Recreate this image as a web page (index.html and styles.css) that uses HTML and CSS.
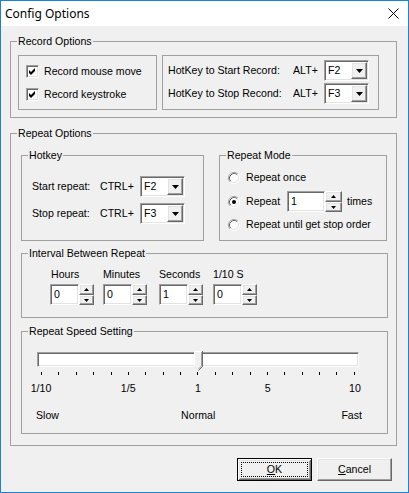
FILE: index.html
```html
<!DOCTYPE html>
<html>
<head>
<meta charset="utf-8">
<title>Config Options</title>
<link rel="stylesheet" href="styles.css">
</head>
<body>
<div class="window">
  <div class="titlebar">
    <span class="title">Config Options</span>
    <svg class="close" width="11" height="11" viewBox="0 0 11 11"><path d="M0.5 0.5L10.5 10.5M10.5 0.5L0.5 10.5" stroke="#000" stroke-width="1" fill="none"/></svg>
  </div>
  <div class="client">
    <div class="group g-record">
      <span class="gtitle">Record Options</span>
      <div class="record-row">
        <div class="box box-checks">
          <div class="check-row">
            <span class="checkbox sunken"><svg width="9" height="9" viewBox="0 0 9 9"><path d="M1 3L3 5L7 1L7 4L3 8L1 6Z" fill="#000"/></svg></span>
            <span>Record mouse move</span>
          </div>
          <div class="check-row">
            <span class="checkbox sunken"><svg width="9" height="9" viewBox="0 0 9 9"><path d="M1 3L3 5L7 1L7 4L3 8L1 6Z" fill="#000"/></svg></span>
            <span>Record keystroke</span>
          </div>
        </div>
        <div class="box box-hotkeys">
          <div class="hk-row">
            <span class="hk-label">HotKey to Start Record:</span>
            <span class="hk-mod">ALT+</span>
            <span class="combo sunken"><span class="combo-text">F2</span><span class="drop raised"><svg width="7" height="4" viewBox="0 0 7 4"><path d="M0 0H7L3.5 4Z" fill="#000"/></svg></span></span>
          </div>
          <div class="hk-row">
            <span class="hk-label">HotKey to Stop Recond:</span>
            <span class="hk-mod">ALT+</span>
            <span class="combo sunken"><span class="combo-text">F3</span><span class="drop raised"><svg width="7" height="4" viewBox="0 0 7 4"><path d="M0 0H7L3.5 4Z" fill="#000"/></svg></span></span>
          </div>
        </div>
      </div>
    </div>

    <div class="group g-repeat">
      <span class="gtitle">Repeat Options</span>
      <div class="repeat-top">
        <div class="group g-hotkey">
          <span class="gtitle">Hotkey</span>
          <div class="rk-row">
            <span class="rk-label">Start repeat:</span>
            <span class="rk-mod">CTRL+</span>
            <span class="combo sunken"><span class="combo-text">F2</span><span class="drop raised"><svg width="7" height="4" viewBox="0 0 7 4"><path d="M0 0H7L3.5 4Z" fill="#000"/></svg></span></span>
          </div>
          <div class="rk-row">
            <span class="rk-label">Stop repeat:</span>
            <span class="rk-mod">CTRL+</span>
            <span class="combo sunken"><span class="combo-text">F3</span><span class="drop raised"><svg width="7" height="4" viewBox="0 0 7 4"><path d="M0 0H7L3.5 4Z" fill="#000"/></svg></span></span>
          </div>
        </div>
        <div class="group g-mode">
          <span class="gtitle">Repeat Mode</span>
          <div class="radio-row r1">
            <svg class="radio" width="12" height="12" viewBox="0 0 12 12"><circle cx="6" cy="6" r="5" fill="#fff"/><path d="M2.11 9.89A5.5 5.5 0 0 1 9.89 2.11" stroke="#a0a0a0" fill="none"/><path d="M9.89 2.11A5.5 5.5 0 0 1 2.11 9.89" stroke="#fff" fill="none"/><path d="M2.82 9.18A4.5 4.5 0 0 1 9.18 2.82" stroke="#696969" fill="none"/><path d="M9.18 2.82A4.5 4.5 0 0 1 2.82 9.18" stroke="#e3e3e3" fill="none"/></svg>
            <span>Repeat once</span>
          </div>
          <div class="radio-row r2">
            <svg class="radio" width="12" height="12" viewBox="0 0 12 12"><circle cx="6" cy="6" r="5" fill="#fff"/><path d="M2.11 9.89A5.5 5.5 0 0 1 9.89 2.11" stroke="#a0a0a0" fill="none"/><path d="M9.89 2.11A5.5 5.5 0 0 1 2.11 9.89" stroke="#fff" fill="none"/><path d="M2.82 9.18A4.5 4.5 0 0 1 9.18 2.82" stroke="#696969" fill="none"/><path d="M9.18 2.82A4.5 4.5 0 0 1 2.82 9.18" stroke="#e3e3e3" fill="none"/><circle cx="6" cy="6" r="2" fill="#000"/></svg>
            <span class="rep-label">Repeat</span>
            <span class="edit sunken edit-times">1</span>
            <span class="spin spin-wide">
              <span class="spin-btn up raised"><svg width="5" height="3" viewBox="0 0 5 3"><path d="M2.5 0L5 3H0Z" fill="#000"/></svg></span>
              <span class="spin-btn down raised"><svg width="5" height="3" viewBox="0 0 5 3"><path d="M0 0H5L2.5 3Z" fill="#000"/></svg></span>
            </span>
            <span class="times">times</span>
          </div>
          <div class="radio-row r3">
            <svg class="radio" width="12" height="12" viewBox="0 0 12 12"><circle cx="6" cy="6" r="5" fill="#fff"/><path d="M2.11 9.89A5.5 5.5 0 0 1 9.89 2.11" stroke="#a0a0a0" fill="none"/><path d="M9.89 2.11A5.5 5.5 0 0 1 2.11 9.89" stroke="#fff" fill="none"/><path d="M2.82 9.18A4.5 4.5 0 0 1 9.18 2.82" stroke="#696969" fill="none"/><path d="M9.18 2.82A4.5 4.5 0 0 1 2.82 9.18" stroke="#e3e3e3" fill="none"/></svg>
            <span>Repeat until get stop order</span>
          </div>
        </div>
      </div>

      <div class="group g-interval">
        <span class="gtitle">Interval Between Repeat</span>
        <div class="ival-row">
          <div class="ival col-h">
            <span class="ival-label lbl-h">Hours</span>
            <div class="ival-ctl">
              <span class="edit sunken edit-num">0</span>
              <span class="spin">
                <span class="spin-btn up raised"><svg width="5" height="3" viewBox="0 0 5 3"><path d="M2.5 0L5 3H0Z" fill="#000"/></svg></span>
                <span class="spin-btn down raised"><svg width="5" height="3" viewBox="0 0 5 3"><path d="M0 0H5L2.5 3Z" fill="#000"/></svg></span>
              </span>
            </div>
          </div>
          <div class="ival col-m">
            <span class="ival-label">Minutes</span>
            <div class="ival-ctl">
              <span class="edit sunken edit-num">0</span>
              <span class="spin">
                <span class="spin-btn up raised"><svg width="5" height="3" viewBox="0 0 5 3"><path d="M2.5 0L5 3H0Z" fill="#000"/></svg></span>
                <span class="spin-btn down raised"><svg width="5" height="3" viewBox="0 0 5 3"><path d="M0 0H5L2.5 3Z" fill="#000"/></svg></span>
              </span>
            </div>
          </div>
          <div class="ival col-s">
            <span class="ival-label">Seconds</span>
            <div class="ival-ctl">
              <span class="edit sunken edit-num">1</span>
              <span class="spin">
                <span class="spin-btn up raised"><svg width="5" height="3" viewBox="0 0 5 3"><path d="M2.5 0L5 3H0Z" fill="#000"/></svg></span>
                <span class="spin-btn down raised"><svg width="5" height="3" viewBox="0 0 5 3"><path d="M0 0H5L2.5 3Z" fill="#000"/></svg></span>
              </span>
            </div>
          </div>
          <div class="ival col-t">
            <span class="ival-label">1/10 S</span>
            <div class="ival-ctl">
              <span class="edit sunken edit-num">0</span>
              <span class="spin">
                <span class="spin-btn up raised"><svg width="5" height="3" viewBox="0 0 5 3"><path d="M2.5 0L5 3H0Z" fill="#000"/></svg></span>
                <span class="spin-btn down raised"><svg width="5" height="3" viewBox="0 0 5 3"><path d="M0 0H5L2.5 3Z" fill="#000"/></svg></span>
              </span>
            </div>
          </div>
        </div>
      </div>

      <div class="group g-speed">
        <span class="gtitle">Repeat Speed Setting</span>
        <div class="slider">
          <div class="track sunken"></div>
          <svg class="thumb" width="9" height="20" viewBox="0 0 9 20">
            <path d="M0 0H9V15.5L4.5 20L0 15.5Z" fill="#f0f0f0"/>
            <path d="M0.5 15.5V0.5H8" stroke="#fff" fill="none"/>
            <path d="M8.5 0V15.5L4.5 19.5" stroke="#696969" fill="none"/>
            <path d="M7.5 1V15L4.5 18" stroke="#a0a0a0" fill="none"/>
            <path d="M0.5 15.5L3.5 18.5" stroke="#e3e3e3" fill="none"/>
          </svg>
        </div>
        <div class="ticks">
          <i></i><i></i><i></i><i></i><i></i><i></i><i></i><i></i><i></i><i></i>
          <i></i><i></i><i></i><i></i><i></i><i></i><i></i><i></i><i></i>
        </div>
        <div class="scale">
          <span class="scale-label" style="left:0%">1/10</span>
          <span class="scale-label" style="left:27.78%">1/5</span>
          <span class="scale-label" style="left:50%">1</span>
          <span class="scale-label" style="left:72.22%">5</span>
          <span class="scale-label" style="left:100%">10</span>
        </div>
        <div class="speed-words">
          <span>Slow</span>
          <span class="normal">Normal</span>
          <span>Fast</span>
        </div>
      </div>
    </div>

    <div class="buttons">
      <button class="btn btn-default"><span class="focus"><u>O</u>K</span></button>
      <button class="btn raised"><u>C</u>ancel</button>
    </div>
  </div>
</div>
</body>
</html>
```

FILE: styles.css
```css
* { box-sizing: border-box; }
html, body { margin: 0; padding: 0; }
body {
  width: 409px;
  height: 493px;
  overflow: hidden;
  background: #f0f0f0;
  font-family: "Liberation Sans", Arial, sans-serif;
  font-size: 10.6px;
  line-height: 13px;
  color: #000;
}
.window {
  width: 409px;
  height: 493px;
  border: 1px solid #1883d7;
  display: flex;
  flex-direction: column;
  background: #f0f0f0;
}
.titlebar {
  flex: none;
  height: 25px;
  background: #fff;
  display: flex;
  align-items: center;
  justify-content: space-between;
  padding: 0 9px 0 4px;
}
.title {
  font-family: "Noto Sans", "Segoe UI", sans-serif;
  font-size: 12px;
  line-height: 16px;
}
.close { display: block; }
.client {
  flex: 1;
  padding: 15px 0 0 9px;
}

/* 3D edges */
.sunken {
  border: 1px solid;
  border-color: #a0a0a0 #fff #fff #a0a0a0;
  box-shadow: inset 1px 1px 0 #696969, inset -1px -1px 0 #e3e3e3;
  background: #fff;
}
.raised {
  border: 1px solid;
  border-color: #fff #696969 #696969 #fff;
  box-shadow: inset -1px -1px 0 #a0a0a0, inset 1px 1px 0 #e3e3e3;
  background: #f0f0f0;
}

/* group boxes */
.group {
  position: relative;
  border: 1px solid #a0a0a0;
}
.gtitle {
  position: absolute;
  top: -7px;
  left: 6px;
  padding: 0 1px;
  background: #f0f0f0;
  line-height: 13px;
  white-space: nowrap;
}
.box { border: 1px solid #a0a0a0; }

/* record options */
.g-record {
  width: 387px;
  height: 77px;
  padding: 13px 0 0 7px;
}
.record-row {
  display: flex;
  gap: 5px;
}
.box-checks {
  width: 139px;
  height: 55px;
  padding: 9px 0 0 7px;
  display: flex;
  flex-direction: column;
  gap: 10px;
}
.check-row {
  display: flex;
  align-items: center;
  gap: 5px;
  height: 13px;
  white-space: nowrap;
}
.checkbox {
  width: 13px;
  height: 13px;
  display: flex;
  align-items: center;
  justify-content: center;
  flex: none;
}
.checkbox svg { display: block; }
.box-hotkeys {
  width: 217px;
  height: 55px;
  padding: 4px 0 0 5px;
  display: flex;
  flex-direction: column;
  gap: 2px;
}
.hk-row, .rk-row {
  display: flex;
  align-items: center;
  height: 21px;
  white-space: nowrap;
}
.hk-label { width: 125px; }
.hk-mod { width: 31px; }

/* combo */
.combo {
  width: 45px;
  height: 21px;
  display: flex;
  align-items: center;
  padding: 1px;
  flex: none;
}
.combo-text { padding-left: 2px; }
.drop {
  margin-left: auto;
  width: 16px;
  height: 17px;
  display: flex;
  align-items: center;
  justify-content: center;
}
.drop svg { display: block; }

/* repeat options */
.g-repeat {
  margin-top: 15px;
  width: 387px;
  height: 313px;
  padding: 21px 0 0 10px;
}
.repeat-top {
  display: flex;
  gap: 15px;
}
.g-hotkey {
  width: 183px;
  height: 86px;
  padding: 20px 0 0 10px;
  display: flex;
  flex-direction: column;
  gap: 6px;
}
.rk-label { width: 68px; }
.rk-mod { width: 40px; }

.g-mode {
  width: 168px;
  height: 86px;
  padding: 15px 0 0 8px;
}
.radio-row {
  display: flex;
  align-items: center;
  white-space: nowrap;
}
.radio { display: block; flex: none; margin-right: 6px; }
.r1 { height: 13px; }
.r2 { height: 21px; margin-top: 7px; }
.r3 { height: 13px; margin-top: 6px; }
.rep-label { width: 41px; }
.edit {
  height: 21px;
  display: flex;
  align-items: center;
  padding-left: 3px;
  flex: none;
}
.edit-times { width: 38px; }
.edit-num { width: 29px; }
.times { margin-left: 5px; }

.spin {
  display: flex;
  flex-direction: column;
  width: 15px;
  height: 21px;
  flex: none;
}
.spin-wide { width: 17px; }
.spin-btn {
  display: flex;
  align-items: center;
  justify-content: center;
}
.spin-btn.up { height: 11px; }
.spin-btn.down { height: 10px; }
.spin-btn svg { display: block; }

/* interval */
.g-interval {
  margin-top: 12px;
  width: 367px;
  height: 65px;
  padding: 14px 0 0 28px;
}
.ival-row { display: flex; }
.ival {
  display: flex;
  flex-direction: column;
  gap: 3px;
  width: 44px;
}
.ival-label { height: 13px; white-space: nowrap; }
.lbl-h { padding-left: 1px; }
.ival-ctl { display: flex; }
.col-m { margin-left: 9px; }
.col-s { margin-left: 12px; }
.col-t { margin-left: 10px; }

/* speed */
.g-speed {
  margin-top: 13px;
  width: 367px;
  height: 103px;
  padding: 20px 0 0 15px;
}
.slider {
  position: relative;
  width: 322px;
  height: 15px;
}
.track {
  width: 322px;
  height: 15px;
}
.thumb {
  position: absolute;
  left: 157px;
  top: -1px;
  display: block;
}
.ticks {
  display: flex;
  justify-content: space-between;
  width: 314px;
  height: 3px;
  margin: 5px 0 0 4px;
}
.ticks i {
  display: block;
  width: 1px;
  height: 3px;
  background: #000;
}
.scale {
  position: relative;
  width: 314px;
  height: 13px;
  margin: 7px 0 0 4px;
}
.scale-label {
  position: absolute;
  top: 0;
  transform: translateX(-50%);
  white-space: nowrap;
}
.speed-words {
  display: flex;
  justify-content: space-between;
  width: 326px;
  margin: 14px 0 0 -1px;
  height: 13px;
}
.normal { margin-left: -4px; }

/* buttons */
.buttons {
  display: flex;
  gap: 5px;
  margin: 12px 0 0 227px;
}
.btn {
  width: 75px;
  height: 23px;
  padding: 0;
  margin: 0;
  font-family: "Liberation Sans", Arial, sans-serif;
  font-size: 10.6px;
  line-height: 13px;
  color: #000;
  display: flex;
  align-items: center;
  justify-content: center;
}
.btn u { text-decoration: underline; text-underline-offset: 1px; }
.btn-default {
  border: 1px solid #000;
  background: #f0f0f0;
  box-shadow: inset 1px 1px 0 #fff, inset -1px -1px 0 #696969, inset 2px 2px 0 #e3e3e3, inset -2px -2px 0 #a0a0a0;
  padding: 3px;
}
.focus {
  width: 100%;
  height: 100%;
  border: 1px dotted #000;
  display: flex;
  align-items: center;
  justify-content: center;
}
```
